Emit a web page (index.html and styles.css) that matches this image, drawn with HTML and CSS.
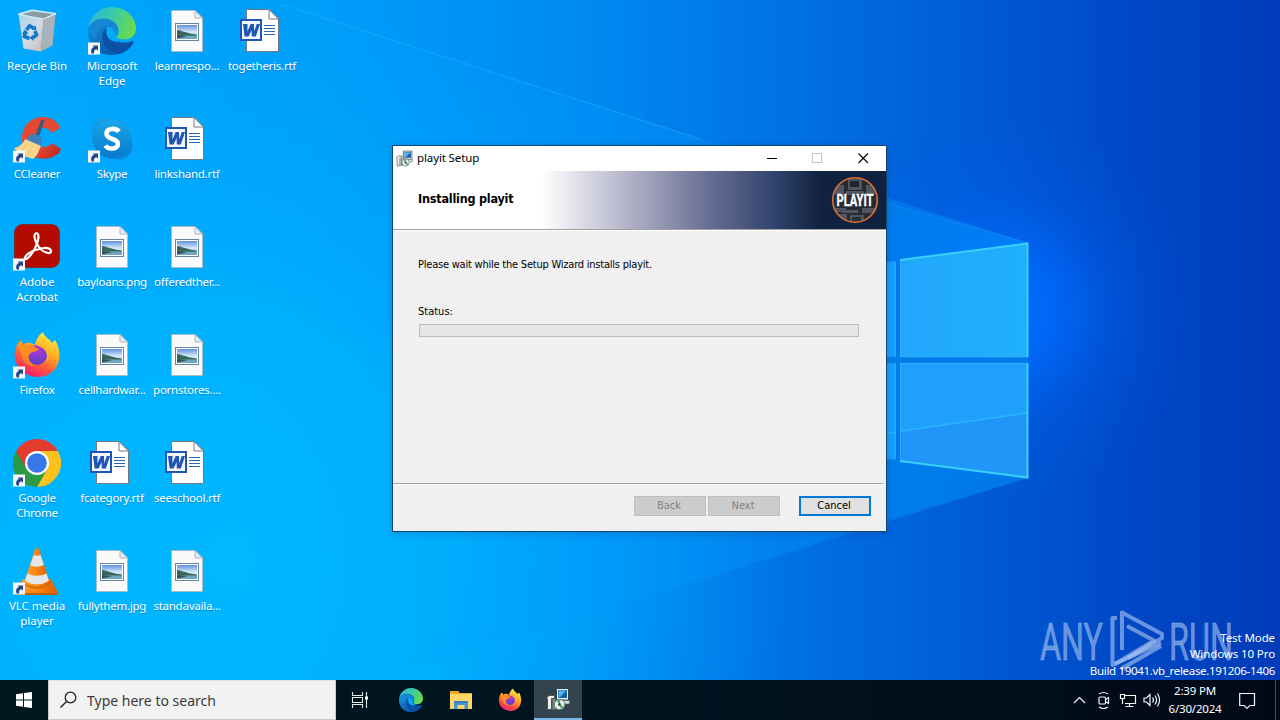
FILE: index.html
```html
<!DOCTYPE html>
<html lang="en">
<head>
<meta charset="utf-8">
<title>Desktop</title>
<link rel="stylesheet" href="styles.css">
</head>
<body>
<svg class="defs" width="0" height="0" aria-hidden="true">
  <defs>
    <linearGradient id="edgeBlue" x1="0" y1="0" x2="1" y2="1"><stop offset="0" stop-color="#1597dc"/><stop offset=".6" stop-color="#0b62b5"/><stop offset="1" stop-color="#0a4a9b"/></linearGradient>
    <linearGradient id="edgeGreen" x1="0" y1="0.3" x2="1" y2="0.6"><stop offset="0" stop-color="#30b7dc"/><stop offset=".5" stop-color="#3ccb9f"/><stop offset="1" stop-color="#6ddd48"/></linearGradient>
    <linearGradient id="skypeG" x1="0" y1="0" x2="0" y2="1"><stop offset="0" stop-color="#18a8ea"/><stop offset="1" stop-color="#0778cc"/></linearGradient>
    <linearGradient id="ffBody" x1=".8" y1="0" x2=".3" y2="1"><stop offset="0" stop-color="#fff24a"/><stop offset=".4" stop-color="#ffad22"/><stop offset=".7" stop-color="#ff573b"/><stop offset="1" stop-color="#ee1676"/></linearGradient>
    <linearGradient id="ffFox" x1="0" y1="0" x2="1" y2="1"><stop offset="0" stop-color="#ff9a20"/><stop offset="1" stop-color="#ff7a22"/></linearGradient>
    <radialGradient id="ffGlobe" cx=".5" cy=".2" r=".8"><stop offset="0" stop-color="#b833d8"/><stop offset="1" stop-color="#5743c8"/></radialGradient>
    <linearGradient id="binFront" x1="0" y1="0" x2="1" y2="1"><stop offset="0" stop-color="#a9d4ec"/><stop offset=".55" stop-color="#d3dce2"/><stop offset="1" stop-color="#c6b9b5"/></linearGradient>
    <linearGradient id="ccRed" x1="0" y1="0" x2="1" y2="1"><stop offset="0" stop-color="#e9452f"/><stop offset=".6" stop-color="#e04a36"/><stop offset="1" stop-color="#b81e14"/></linearGradient>
    <linearGradient id="vlcO" x1="0" y1="0" x2="1" y2="0"><stop offset="0" stop-color="#ffa22c"/><stop offset=".5" stop-color="#fb8310"/><stop offset="1" stop-color="#d96000"/></linearGradient>
    <linearGradient id="sky" x1="0" y1="0" x2="0" y2="1"><stop offset="0" stop-color="#5f8fe0"/><stop offset=".5" stop-color="#d3e9f7"/><stop offset="1" stop-color="#a6cce0"/></linearGradient>

    <symbol id="shortcut" viewBox="0 0 13 13">
      <rect width="13" height="13" fill="#f5f7fa"/>
      <path d="M4 12C2.600 8.500 3.800 5.600 6.600 5L5 3.200H10.800V9L9 7.400C6.900 8 6.200 9.600 6.600 12Z" fill="#24478c"/>
    </symbol>

    <symbol id="recycle" viewBox="0 0 48 48">
      <path d="M5.500 7L19 3 43 6.500 40.500 10Z" fill="#c4dff0" fill-opacity=".8" stroke="#eaf6fd" stroke-width="1"/>
      <path d="M9 7.200L19.500 4.500 39 7 31 12Z" fill="#8d9aa4"/>
      <path d="M5.500 7.500L30.500 12 28 44.500 10.500 41.500Z" fill="url(#binFront)"/>
      <path d="M30.500 12L42.500 7 39.500 38.500 28 44.500Z" fill="#aab2b9"/>
      <path d="M5.500 7.300L30.500 12 42.800 6.800" fill="none" stroke="#e9f5fc" stroke-width="1"/>
      <g fill="none" stroke="#1478c8" stroke-width="3.600">
        <path d="M13.500 23L16.500 18.800 20.500 21"/><path d="M22 24L23.500 28 20 31"/><path d="M16.500 31.500L11.500 29.500 12 25"/>
      </g>
      <path d="M19 23L23.500 23.300 22.500 18ZM20.500 27.500V34L16.500 30.800ZM9 27L12 22.500 15.500 26.500Z" fill="#1478c8"/>
    </symbol>

    <symbol id="edge" viewBox="0 0 48 48">
      <path d="M45.500 34C41 43.500 32 48 23.500 48 9 48 0 37 0 25 0 14 12 10 20 14L25 26C26 34 34 38 45.500 34Z" fill="url(#edgeBlue)"/>
      <path d="M.4 21C2 8.500 12 0 24 0 38.500 0 48 11 48 21 48 29 42 32.500 36 32.500 31 32.500 28 31 28.500 29.500 30 28 30.500 26 30.500 24 30.500 17 24 12 16.500 12 9 12 3 15.500.4 21Z" fill="url(#edgeGreen)"/>
      <path d="M.3 21C5 12 13 11 18 11.800 25.500 13 30.500 18 30.500 24 30.500 26 29.500 28.500 28.500 29.500 27 24.500 25 21 20.500 19.500 14 18 8 24 8 33 3 29 .3 25 .3 21Z" fill="#1587d3"/>
      <path d="M18 21C13 25 13 34 18 40 22 45 29 48 33 46.500 39 44 43 40 45 36.500 46 34.500 44.500 33.500 43 34.500 34 39 22 36 18.500 27Z" fill="#0b50a4"/>
      <path d="M18.500 20.500C23 18.500 27 23 28.500 29.500 28 32 31 33 36 32.500 33 36 20 36 18.500 27Z" fill="#03aaf8"/>
    </symbol>

    <symbol id="picfile" viewBox="0 0 48 48">
      <path d="M8.500 3.500H32L39.500 11V44.500H8.500Z" fill="#fafafa" stroke="#b3b8bd" stroke-width=".8"/>
      <path d="M32 3.500V11H39.500Z" fill="#e2eef6" stroke="#aaa9ae" stroke-width=".8"/>
      <rect x="12.500" y="16.500" width="23" height="17" fill="#fff" stroke="#66849e"/>
      <rect x="14" y="18" width="20" height="14" fill="url(#sky)"/>
      <path d="M14 23C19 23.500 24 26.500 33.500 27.500L34 29H14Z" fill="#38665a"/>
      <path d="M14 28.500H34V32H14Z" fill="#6ba7bf"/>
      <path d="M14 28L24 29.300 14 31.500Z" fill="#31544e"/>
    </symbol>

    <symbol id="wordfile" viewBox="0 0 48 48">
      <path d="M8.500 2.500H31L40.500 12V44.500H8.500Z" fill="#fff" stroke="#737980"/>
      <path d="M31 2.500V12H40.500Z" fill="#fff" stroke="#737980"/>
      <path d="M26 18.500H37M26 21.500H37M26 24.500H37M26 27.500H37" stroke="#2a66b8"/>
      <rect x="2" y="12" width="22" height="22" fill="#1f55b4"/>
      <rect x="4" y="14" width="18" height="18" fill="#f3f7fc"/>
      <path d="M5 17H9.500L9.400 24.500 12.700 17H16L16.200 24.500 18.800 17H22L17.800 29.500H13.800L13.600 23 10.600 29.500H6.600Z" fill="#1f55b4"/>
    </symbol>

    <symbol id="ccleaner" viewBox="0 0 48 48">
      <path d="M47.500 13C42 2 30 0 21 4 9 9 6 24 12 34 18 44 34 48 46 38L48 34 39 28C34 34 27 33 24 27 21 20 25 14 31 13 35 13 37 15 38 18Z" fill="url(#ccRed)"/>
      <path d="M28.500 4.500L31.500 5 26 22 22 21Z" fill="#315b84"/>
      <path d="M17 20C21 18 27 20 29 24L27 33 12 26Z" fill="#3d80bb"/>
      <path d="M12 24L28 31 24 40 20 44 8 40 1 33C6 32 10 29 12 24Z" fill="#f7d58b"/>
      <path d="M14 29L9 36M20 31L15 39" stroke="#e9c273" stroke-width="1"/>
    </symbol>

    <symbol id="skype" viewBox="0 0 48 48">
      <circle cx="17.500" cy="17.500" r="14.500" fill="#129ce2"/><circle cx="31" cy="31" r="13.500" fill="#0c86d6"/>
      <circle cx="24" cy="24" r="19.500" fill="url(#skypeG)"/>
      <path d="M31 16.500C28 12.500 18.500 13 18.500 18.500 18.500 25.500 30 22.500 30 29 30 34.500 20 35 17.500 30.500" fill="none" stroke="#fff" stroke-width="4.600"/>
    </symbol>

    <symbol id="acrobat" viewBox="0 0 48 48">
      <rect x="1.500" y="1.500" width="45" height="43" rx="8" fill="#b30b00" stroke="#82241f" stroke-width=".8"/>
      <path d="M12 34.500C15 28 24 26.500 31 25 39 24.500 40 30.500 35 30 28 29 22 20 21.500 14 21.500 9 25.500 9 25.500 14 25 22 19 31 15.500 34.500 13 37 11 36.500 12 34.500Z" fill="none" stroke="#fff" stroke-width="2.200" stroke-linejoin="round"/>
    </symbol>

    <symbol id="firefox" viewBox="0 0 48 48">
      <path d="M30 1C31 6 37 8 39 12L42 9C47 17 48 27 44 35 38 46 24 49 13 43 2 37-1 24 4 14L8 9 10 14C14 10 19 12 22 14 23 8 26 4 30 1Z" fill="url(#ffBody)"/>
      <circle cx="24" cy="24" r="10" fill="url(#ffGlobe)"/>
      <path d="M4 14L8 9 11 14C16 12 20 14 23 17L26 18C23 22 18 20 17 23 14 26 16 33 24 35 15 36 9 30 9 24 8 20 6 17 4 14Z" fill="url(#ffFox)"/>
      <path d="M22 14C32 11 39 20 34 31 36 20 30 16 22 14Z" fill="#ffb626"/>
    </symbol>

    <symbol id="chrome" viewBox="0 0 48 48">
      <path d="M24 24L3.200 12A24 24 0 0 1 44.800 12Z" fill="#e33b2e"/>
      <path d="M24 24L44.800 12A24 24 0 0 1 24 48Z" fill="#fcc31e"/>
      <path d="M24 24L24 48A24 24 0 0 1 3.200 12Z" fill="#2b9a47"/>
      <path d="M24 12H44.800L34.400 30Z" fill="#fcc31e"/><path d="M34.400 30L24 48 13.600 30Z" fill="#2b9a47"/><path d="M13.600 30L3.200 12 24 12Z" fill="#e33b2e"/>
      <circle cx="24" cy="24" r="12" fill="#fff"/><circle cx="24" cy="24" r="9.800" fill="#3777ea"/>
    </symbol>

    <symbol id="vlc" viewBox="0 0 48 48">
      <path d="M10 32H38L45 46H4Z" fill="url(#vlcO)"/><path d="M4 46H45V48H4Z" fill="#c75c04"/>
      <path d="M10.500 37Q24 46 37.500 37L37 34H11Z" fill="#d76604"/>
      <path d="M22 2Q24 0 26 2L37 36Q24 44 11 36Z" fill="url(#vlcO)"/>
      <path d="M20.800 8Q24 9.500 27.500 8L31 18Q24 21 17 18.500Z" fill="#e4e6e8"/>
      <path d="M14.300 26.500Q24 31 33.500 26.500L36 34Q24 41 12 34Z" fill="#e4e6e8"/>
    </symbol>

    <symbol id="installer" viewBox="0 0 24 24">
      <path d="M10.500 1.500H22.500V13H10.500Z" fill="#f1f4f6" stroke="#2f4352"/>
      <path d="M12 3H21V11H12Z" fill="#115fa6"/><path d="M12.500 3.500H20.500L13.500 10.500H12.500Z" fill="#55b4ea"/>
      <path d="M13 13.500H23.500V17H14Z" fill="#d8dcdf" stroke="#4b565e" stroke-width=".6"/>
      <path d="M.8 10.500L3 8.500H8.500V11.500H5.500V22.500H1.500V12.500Z" fill="#eceeef" stroke="#454b50" stroke-width=".9"/>
      <path d="M6.500 12H9.500V22.500H6.500Z" fill="#7e8a86"/>
      <circle cx="13.500" cy="17.500" r="5.300" fill="#e5eee7" stroke="#4c625c" stroke-width=".8"/><path d="M13.500 17.500L10.500 13.500 14.500 12.800Z" fill="#3fa35f"/><path d="M13.500 17.500L17.800 19.500 15 22.300Z" fill="#4bad6b"/>
      <circle cx="13.500" cy="17.500" r="1.400" fill="#35454d"/>
    </symbol>
  </defs>
</svg>

<main class="screen">
  <svg class="wallpaper" viewBox="0 0 1280 720" preserveAspectRatio="none" aria-hidden="true">
    <defs>
      <linearGradient id="base" x1="0" y1="0" x2="1" y2="0">
        <stop offset="0" stop-color="#00a9fd"/><stop offset=".25" stop-color="#009df9"/><stop offset=".45" stop-color="#008bf1"/><stop offset=".6" stop-color="#0074e5"/><stop offset=".75" stop-color="#005dd7"/><stop offset=".88" stop-color="#0048c6"/><stop offset="1" stop-color="#003bb8"/>
      </linearGradient>
      <radialGradient id="cyan" gradientUnits="userSpaceOnUse" cx="230" cy="560" r="560"><stop offset="0" stop-color="#00b8ff"/><stop offset=".4" stop-color="#00b5ff" stop-opacity=".85"/><stop offset="1" stop-color="#00a8ff" stop-opacity="0"/></radialGradient>
      <radialGradient id="glow" gradientUnits="userSpaceOnUse" cx="1000" cy="310" r="200"><stop offset="0" stop-color="#0074ff"/><stop offset=".3" stop-color="#006bff" stop-opacity=".75"/><stop offset=".6" stop-color="#0060f0" stop-opacity=".3"/><stop offset="1" stop-color="#0058e0" stop-opacity="0"/></radialGradient>
      <linearGradient id="beam" gradientUnits="userSpaceOnUse" x1="250" y1="0" x2="1028" y2="0"><stop offset="0" stop-color="#00a8ff" stop-opacity="0"/><stop offset=".4" stop-color="#009cff" stop-opacity=".3"/><stop offset="1" stop-color="#0096ff" stop-opacity=".38"/></linearGradient>
      <linearGradient id="pane" x1="0" y1="0" x2="1" y2="0"><stop offset="0" stop-color="#22a7fd"/><stop offset="1" stop-color="#20b0fb"/></linearGradient>
    </defs>
    <rect width="1280" height="720" fill="url(#base)"/>
    <rect width="1280" height="720" fill="url(#cyan)"/>
    <rect width="1280" height="720" fill="url(#glow)"/>
    <path d="M1028 243L250-6V720L1028 478Z" fill="url(#beam)"/>
    <path d="M280 4L700 139" stroke="#35bcff" stroke-opacity=".4"/>
    <path d="M886 203L1028 243" stroke="#2ca6ff" stroke-opacity=".4"/>
    <path d="M800 180L1028 243V478L800 545Z" fill="#008bf4" fill-opacity=".3"/>
    <path d="M780 275L896 261V357H780ZM780 363H896V460L780 444Z" fill="#159fff"/>
    <path d="M900 260L1028 243V357H900Z" fill="url(#pane)"/>
    <path d="M900 363H1028V478L900 461Z" fill="#1fa0fd"/>
    <path d="M900 432L1028 413V478L900 461Z" fill="#2491f5" fill-opacity=".7"/>
    <path d="M896 261H900V461H896ZM886 357.500H1028V363H886Z" fill="#007be8"/>
    <path d="M886 434L896 432M901 431L1027 413" stroke="#27b6ff" stroke-width="1.500"/>
    <path d="M900 260L1027.500 243.500V357M900 461L1027.500 477.500V363" fill="none" stroke="#39d1fb" stroke-width="2"/>
    <path d="M900 357H1028M900 363.500H1028M900.500 261V357M900.500 363V461M895.500 262V357M895.500 363V459" stroke="#42bdff" stroke-opacity=".45"/>
  </svg>

  <section class="icons">
    <div class="item"><svg class="art"><use href="#recycle"/></svg><span class="cap wide">Recycle Bin</span></div>
    <div class="item"><svg class="art"><use href="#ccleaner"/></svg><svg class="arrow"><use href="#shortcut"/></svg><span class="cap">CCleaner</span></div>
    <div class="item"><svg class="art"><use href="#acrobat"/></svg><svg class="arrow"><use href="#shortcut"/></svg><span class="cap wide">Adobe<br>Acrobat</span></div>
    <div class="item"><svg class="art"><use href="#firefox"/></svg><svg class="arrow"><use href="#shortcut"/></svg><span class="cap">Firefox</span></div>
    <div class="item"><svg class="art"><use href="#chrome"/></svg><svg class="arrow"><use href="#shortcut"/></svg><span class="cap">Google<br>Chrome</span></div>
    <div class="item"><svg class="art"><use href="#vlc"/></svg><svg class="arrow"><use href="#shortcut"/></svg><span class="cap wide">VLC media<br>player</span></div>
    <div class="item"><svg class="art"><use href="#edge"/></svg><svg class="arrow"><use href="#shortcut"/></svg><span class="cap wide">Microsoft<br>Edge</span></div>
    <div class="item"><svg class="art"><use href="#skype"/></svg><svg class="arrow"><use href="#shortcut"/></svg><span class="cap">Skype</span></div>
    <div class="item"><svg class="art"><use href="#picfile"/></svg><span class="cap">bayloans.png</span></div>
    <div class="item"><svg class="art"><use href="#picfile"/></svg><span class="cap">cellhardwar...</span></div>
    <div class="item"><svg class="art"><use href="#wordfile"/></svg><span class="cap">fcategory.rtf</span></div>
    <div class="item"><svg class="art"><use href="#picfile"/></svg><span class="cap">fullythem.jpg</span></div>
    <div class="item"><svg class="art"><use href="#picfile"/></svg><span class="cap">learnrespo...</span></div>
    <div class="item"><svg class="art"><use href="#wordfile"/></svg><span class="cap">linkshand.rtf</span></div>
    <div class="item"><svg class="art"><use href="#picfile"/></svg><span class="cap">offeredther...</span></div>
    <div class="item"><svg class="art"><use href="#picfile"/></svg><span class="cap">pornstores....</span></div>
    <div class="item"><svg class="art"><use href="#wordfile"/></svg><span class="cap">seeschool.rtf</span></div>
    <div class="item"><svg class="art"><use href="#picfile"/></svg><span class="cap">standavaila...</span></div>
    <div class="item"><svg class="art"><use href="#wordfile"/></svg><span class="cap">togetheris.rtf</span></div>
  </section>

  <svg class="brand" viewBox="0 0 200 72">
    <g class="brand-text">
      <text x="1" y="52" textLength="63" lengthAdjust="spacingAndGlyphs">ANY</text>
      <text x="130" y="52" textLength="64" lengthAdjust="spacingAndGlyphs">RUN</text>
    </g>
    <g fill="none" stroke="#a9c3ef" stroke-opacity=".62" stroke-width="4" stroke-linejoin="round">
      <path d="M83 42V4.500L123 26V30L89 50"/>
      <path d="M78 10H73.500V57L122 35"/>
      <path d="M88 18L115 32.500 76 56"/>
      <path d="M82 61L122 38"/>
    </g>
  </svg>
  <div class="build"><span>Test Mode</span><span>Windows 10 Pro</span><span class="number">Build 19041.vb_release.191206-1406</span></div>

  <section class="dialog">
    <header class="titlebar">
      <svg class="app"><use href="#installer"/></svg>
      <span class="title">playit Setup</span>
      <svg class="controls" viewBox="0 0 115 25"><path d="M0 12.500H10" stroke="#000"/><rect x="45.500" y="7.500" width="9" height="9" fill="none" stroke="#c4c4c4"/><path d="M91.500 7.500L101 17M101 7.500L91.500 17" stroke="#000" stroke-width="1.100"/></svg>
    </header>
    <div class="banner">
      <h1 class="heading">Installing playit</h1>
      <svg class="logo" viewBox="0 0 48 48">
        <defs><clipPath id="disc"><circle cx="24" cy="24" r="22"/></clipPath></defs>
        <circle cx="24" cy="24" r="22.500" fill="#252a33"/>
        <g clip-path="url(#disc)" fill="#4f565f">
          <rect x="17" y="3" width="14" height="11" rx="1"/><rect x="15" y="15" width="18" height="4"/><rect x="3" y="9" width="10" height="9"/><rect x="35" y="9" width="11" height="9"/>
          <rect x="4" y="32" width="11" height="4"/><rect x="11" y="34" width="16" height="3"/><rect x="31" y="32" width="13" height="5"/><rect x="19" y="39" width="14" height="8"/><rect x="8" y="38" width="8" height="6"/>
          <rect x="19" y="5" width="9" height="6" fill="#20242b"/><rect x="21" y="41" width="9" height="5" fill="#2b3038"/>
        </g>
        <circle cx="24" cy="24" r="22.300" fill="none" stroke="#df7132" stroke-width="1.600"/>
        <text class="logo-text" x="5.500" y="29.500" textLength="37" lengthAdjust="spacingAndGlyphs">PLAYIT</text>
      </svg>
    </div>
    <div class="body">
      <p class="wait">Please wait while the Setup Wizard installs playit.</p>
      <p class="status">Status:</p>
      <div class="progress"></div>
    </div>
    <footer class="actions">
      <span class="btn off">Back</span><span class="btn off">Next</span><span class="btn primary">Cancel</span>
    </footer>
  </section>

  <nav class="taskbar">
    <div class="start"><svg width="16" height="16" viewBox="0 0 16 16"><path d="M0 2.200L7 1.200V7.500H0ZM8 1L16 0V7.500H8ZM0 8.500H7V14.800L0 13.800ZM8 8.500H16V16L8 15Z" fill="#fff"/></svg></div>
    <div class="search"><svg width="18" height="18" viewBox="0 0 18 18"><circle cx="10.500" cy="6.500" r="5.300" fill="none" stroke="#222" stroke-width="1.300"/><path d="M6.500 10.500L.5 16.500" stroke="#222" stroke-width="1.400"/></svg><span>Type here to search</span></div>
    <div class="task view"><svg width="18" height="16" viewBox="0 0 18 16"><path d="M1.500 0V3.500H11.500V0M1.500 16V12.500H11.500V16M1.500 5.500H11.500V10.500H1.500ZM15.500 0V16" fill="none" stroke="#e4ecee" stroke-width="1.100"/><rect x="14" y="4.500" width="3" height="3" fill="#fff"/></svg></div>
    <div class="task first"><svg width="24" height="24"><use href="#edge"/></svg></div>
    <div class="task"><svg width="22" height="20" viewBox="0 0 22 20"><path d="M0 1H8L10 3H22V19H0Z" fill="#e9a825"/><path d="M0 4H22V19H0Z" fill="#ffd766"/><path d="M4 19V11H18V19H14.500V15H7.500V19Z" fill="#4596d2"/><path d="M4 11H18V13H4Z" fill="#3680bd"/></svg></div>
    <div class="task"><svg width="24" height="24"><use href="#firefox"/></svg></div>
    <div class="task active"><svg width="24" height="24"><use href="#installer"/></svg></div>
    <div class="tray">
      <svg width="92" height="20" viewBox="0 0 92 20" fill="none" stroke="#f4f6f8" stroke-width="1.200">
        <path d="M1 13L6.500 7.500 12 13"/>
        <rect x="26" y="7" width="6.500" height="7" rx="1"/><path d="M32.500 9.500L35.500 7.500V13.500L32.500 11.500M26 4Q30.500 1 35 4M26 17Q30.500 20 35 17"/>
        <path d="M51 5.500H62.500V13.500H52M56.500 13.500V16.500M52.500 16.500H60.500M47.500 4.500H51.500V8.500H47.500ZM49.500 8.500V14"/>
        <path d="M71 8H73.500L77 4.500V15.500L73.500 12H71ZM79.500 7.500Q81.500 10 79.500 12.500M82 5.500Q85 10 82 14.500M84.500 3.500Q88.500 10 84.500 16.500"/>
      </svg>
    </div>
    <div class="clock"><span>2:39 PM</span><span>6/30/2024</span></div>
    <div class="notice"><svg width="17" height="17" viewBox="0 0 17 17"><path d="M.7 1.500H15.500V13.500H10.800L8 16.300 5.200 13.500H.7Z" fill="none" stroke="#f5f7f8" stroke-width="1.200"/></svg></div>
    <div class="peek"></div>
  </nav>
</main>
</body>
</html>
```

FILE: styles.css
```css
* { box-sizing: border-box; }
body { margin: 0; overflow: hidden; font-family: "Noto Sans", "Open Sans", sans-serif; }
.defs { position: absolute; }
.screen { position: relative; width: 1280px; height: 720px; overflow: hidden; display: flex; flex-direction: column; background: #0090f0; }
.wallpaper { position: absolute; inset: 0; width: 1280px; height: 720px; }

.icons { position: relative; flex: 1; min-height: 0; display: grid; grid-auto-flow: column; grid-template-rows: repeat(6, 108px); grid-auto-columns: 75px; justify-content: start; padding-top: 7px; }
.item { position: relative; display: flex; flex-direction: column; align-items: center; width: 74px; }
.art { width: 48px; height: 48px; flex: none; }
.arrow { position: absolute; left: 13px; top: 35px; width: 12px; height: 13px; }
.cap { margin-top: 3px; font-size: 11.5px; letter-spacing: -.25px; line-height: 15px; text-align: center; color: #fff; white-space: nowrap; text-shadow: 0 1px 1px rgba(0, 40, 90, .3); }
.cap.wide { letter-spacing: -.05px; }

.brand { position: absolute; left: 1039px; top: 608px; width: 200px; height: 72px; }
.brand-text { font-family: Roboto, sans-serif; font-size: 52px; fill: #a9c3ef; fill-opacity: .62; stroke: #a9c3ef; stroke-opacity: .4; stroke-width: 1px; }
.build { position: absolute; right: 5px; bottom: 40px; display: flex; flex-direction: column; align-items: flex-end; color: #fff; font-size: 11.5px; letter-spacing: -.1px; line-height: 16px; white-space: nowrap; }
.build .number { line-height: 18px; letter-spacing: -.32px; }

.dialog { position: absolute; left: 392px; top: 145px; width: 495px; height: 387px; display: flex; flex-direction: column; border: 1px solid #11446f; background: #f0f0f0; box-shadow: 0 2px 8px rgba(0, 30, 90, .2); font-family: "DejaVu Sans Condensed", "DejaVu Sans", sans-serif; color: #000; }
.titlebar { height: 25px; flex: none; display: flex; align-items: center; padding-left: 3px; background: #fff; font-family: "Noto Sans", sans-serif; font-size: 11.5px; letter-spacing: -.12px; }
.app { width: 17px; height: 17px; }
.title { margin: -2px 0 0 4px; }
.controls { width: 115px; height: 25px; margin: 0 4px 0 auto; }
.banner { height: 59px; flex: none; display: flex; align-items: center; justify-content: space-between; padding: 0 7px 0 25px; border-bottom: 1px solid #a0a0a0; background: linear-gradient(90deg, #fff 0, #fff 149px, #e3e3ed 180px, #a5a6be 250px, #686f94 315px, #33446e 380px, #10223f 428px, #10223f 100%); }
.heading { margin: -2px 0 0; font-size: 12.5px; letter-spacing: -.22px; line-height: 16px; font-weight: 700; }
.logo { width: 48px; height: 48px; overflow: visible; }
.logo-text { font-family: Roboto, sans-serif; font-weight: 700; font-size: 16px; fill: #fff; stroke: #fff; stroke-width: .4px; }
.body { flex: 1; border-top: 1px solid #fff; padding: 26px 27px 0 25px; font-size: 11px; letter-spacing: -.22px; line-height: 16px; }
.body p { margin: 0; white-space: nowrap; }
.body .status { margin-top: 31px; letter-spacing: 0; }
.progress { width: 440px; height: 13px; margin: 4px 0 0 1px; border: 1px solid #bcbcbc; background: #e6e6e6; }
.actions { height: 48px; flex: none; display: flex; align-items: flex-start; padding: 12px 0 0 241px; margin-right: 3px; border-top: 1px solid #a0a0a0; box-shadow: inset 0 1px #fff; font-size: 11px; }
.btn { flex: none; width: 72px; height: 20px; margin-right: 2px; padding-right: 2px; line-height: 18px; text-align: center; }
.off { border: 1px solid #bfbfbf; background: #ccc; color: #838383; }
.primary { margin: 0 0 0 17px; border: 2px solid #0078d7; background: #e1e1e1; line-height: 16px; }

.taskbar { position: relative; height: 40px; flex: none; display: flex; background: linear-gradient(90deg, #001720, #001420 50%, #020916); }
.start { width: 48px; display: flex; align-items: center; justify-content: center; }
.search { width: 288px; display: flex; align-items: center; gap: 9px; padding-left: 11px; background: #f2f2f2; border: 1px solid #c9cdcf; border-top-color: #dce2e5; font-size: 14px; color: #3a3a3a; white-space: nowrap; }
.task { width: 49px; display: flex; align-items: center; justify-content: center; }
.task.view { width: 48px; }
.task.first { width: 52px; padding-left: 2px; }
.task.active { width: 48px; background: #34444c; border-bottom: 2px solid #76b9ed; }
.tray { margin-left: auto; display: flex; align-items: center; }
.clock { width: 60px; padding-top: 2px; display: flex; flex-direction: column; align-items: center; font-size: 11.5px; letter-spacing: -.2px; line-height: 18px; color: #fff; white-space: nowrap; }
.notice { width: 50px; display: flex; align-items: center; padding-left: 14px; }
.peek { width: 5px; border-left: 1px solid #45505d; }
```
